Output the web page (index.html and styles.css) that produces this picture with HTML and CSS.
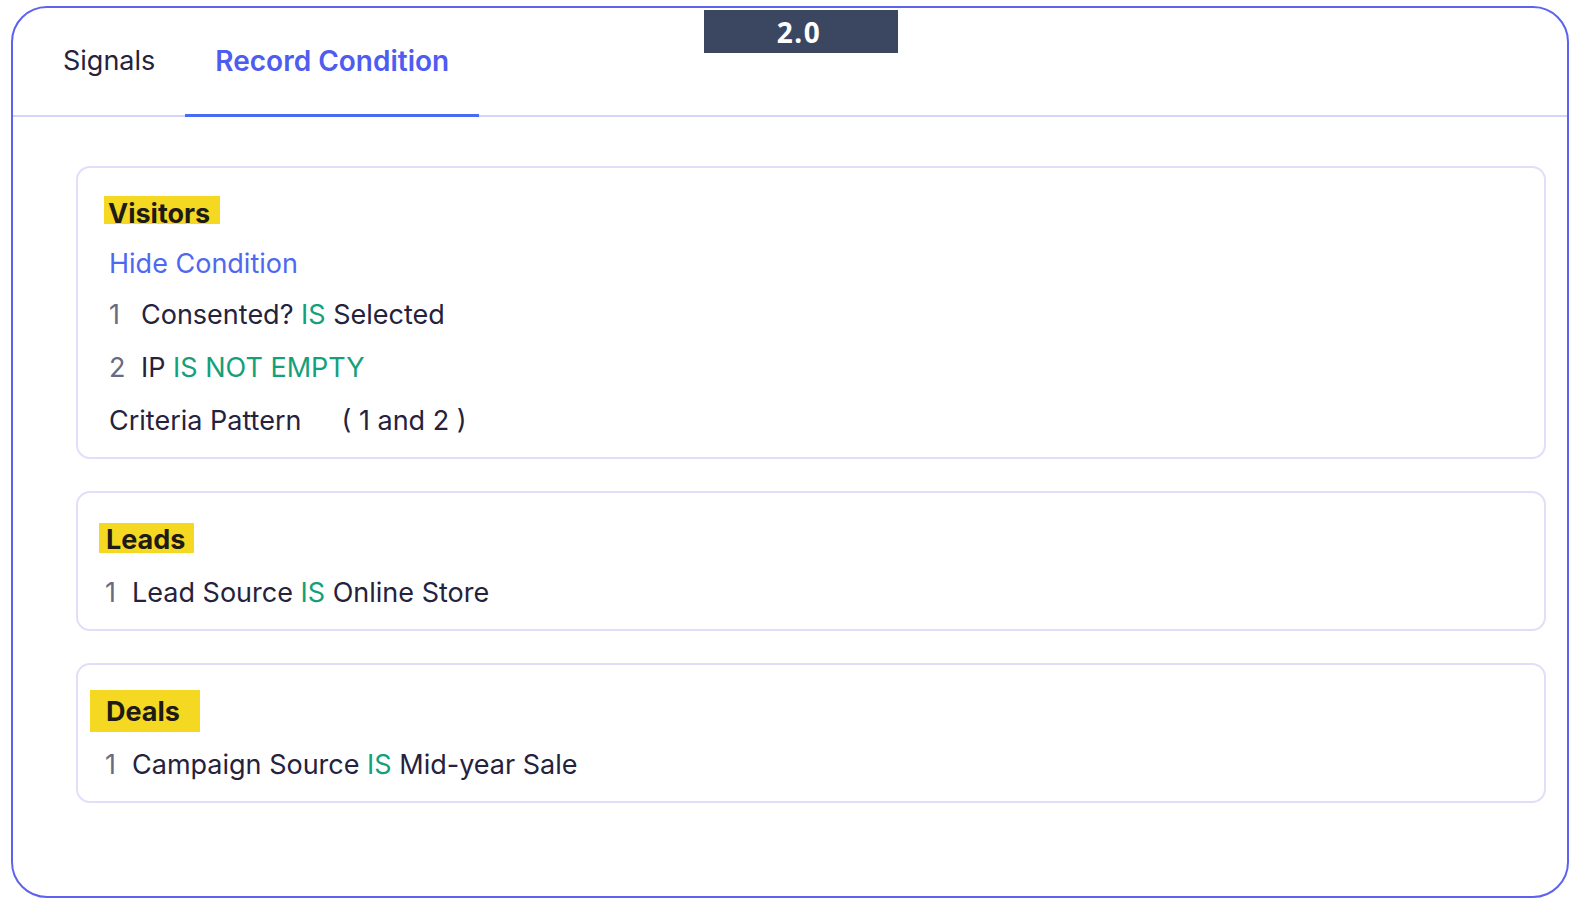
FILE: index.html
```html
<!DOCTYPE html>
<html>
<head>
<meta charset="utf-8">
<link rel="stylesheet" href="styles.css">
</head>
<body>
<div class="frame">
  <div class="tabs">
    <div class="tab">Signals</div>
    <div class="tab tab--active">Record Condition</div>
  </div>
  <div class="badge">2.0</div>
  <div class="cards">
    <div class="card card--visitors">
      <div class="hl hl--visitors">Visitors</div>
      <div class="rows rows--visitors">
        <div class="row row--link">Hide Condition</div>
        <div class="row"><span class="num num--wide">1</span>Consented? <span class="op">IS</span> Selected</div>
        <div class="row"><span class="num num--wide">2</span>IP <span class="op">IS NOT EMPTY</span></div>
        <div class="row">Criteria Pattern<span class="pattern">( 1 and 2 )</span></div>
      </div>
    </div>
    <div class="card card--leads">
      <div class="hl hl--leads">Leads</div>
      <div class="rows rows--leads">
        <div class="row"><span class="num">1</span>Lead Source <span class="op">IS</span> Online Store</div>
      </div>
    </div>
    <div class="card card--deals">
      <div class="hl hl--deals">Deals</div>
      <div class="rows rows--deals">
        <div class="row"><span class="num">1</span>Campaign Source <span class="op">IS</span> Mid-year Sale</div>
      </div>
    </div>
  </div>
</div>
</body>
</html>
```

FILE: styles.css
```css
* { box-sizing: border-box; }
html, body { margin: 0; padding: 0; background: #ffffff; }
body {
  font-family: Inter, "Noto Sans", sans-serif;
  color: #25223d;
}
.frame {
  position: relative;
  margin: 6px 0 0 11px;
  width: 1558px;
  height: 892px;
  border: 2px solid #5d62ef;
  border-radius: 36px;
}
.tabs {
  display: flex;
  align-items: flex-start;
  height: 109px;
  padding-left: 20px;
  border-bottom: 2px solid #d4d4fa;
}
.tab {
  height: 109px;
  padding: 39px 30px 0;
  font-size: 27px;
  line-height: 28px;
  color: #25223d;
  border-bottom: 3px solid transparent;
  margin-bottom: -2px;
}
.tab--active {
  color: #4f5cf0;
  font-size: 28px;
  font-weight: 600;
  border-bottom-color: #4a6af5;
}
.badge {
  position: absolute;
  top: 2px;
  left: 691px;
  width: 194px;
  height: 43px;
  background: #3b4760;
  color: #ffffff;
  font-family: "Noto Sans", sans-serif;
  font-weight: 700;
  font-size: 28px;
  line-height: 45px;
  letter-spacing: 1.5px;
  text-align: center;
  padding-right: 4px;
}
.cards {
  display: flex;
  flex-direction: column;
  gap: 32px;
  padding: 49px 21px 0 63px;
}
.card {
  border: 2px solid #dfdff9;
  border-radius: 14px;
  padding-left: 26px;
  font-size: 27px;
}
.card--visitors { padding-top: 28px; padding-bottom: 10px; }
.card--leads { padding-top: 30px; padding-bottom: 10px; }
.card--deals { padding-top: 25px; padding-bottom: 10px; }
.hl {
  width: fit-content;
  background: #f5d822;
  color: #1e1a16;
  font-weight: 700;
  font-size: 27px;
  line-height: 27px;
}
.hl--visitors { height: 28px; padding: 4px 10px 0 4px; }
.hl--leads { height: 30px; padding: 3px 9px 0 7px; margin-left: -5px; }
.hl--deals { height: 42px; padding: 8px 20px 0 16px; margin-left: -14px; }
.rows--visitors { margin-top: 13px; padding-left: 5px; }
.rows--leads { margin-top: 13px; padding-left: 1px; }
.rows--deals { margin-top: 6px; padding-left: 1px; }
.row {
  height: 53px;
  line-height: 53px;
  white-space: nowrap;
  color: #25223d;
}
.row--link { color: #4f68f0; height: 51px; }
.num {
  display: inline-block;
  width: 27px;
  color: #6b6a7e;
}
.num--wide { width: 32px; }
.op { color: #14a07a; }
.pattern { margin-left: 40px; }
```
